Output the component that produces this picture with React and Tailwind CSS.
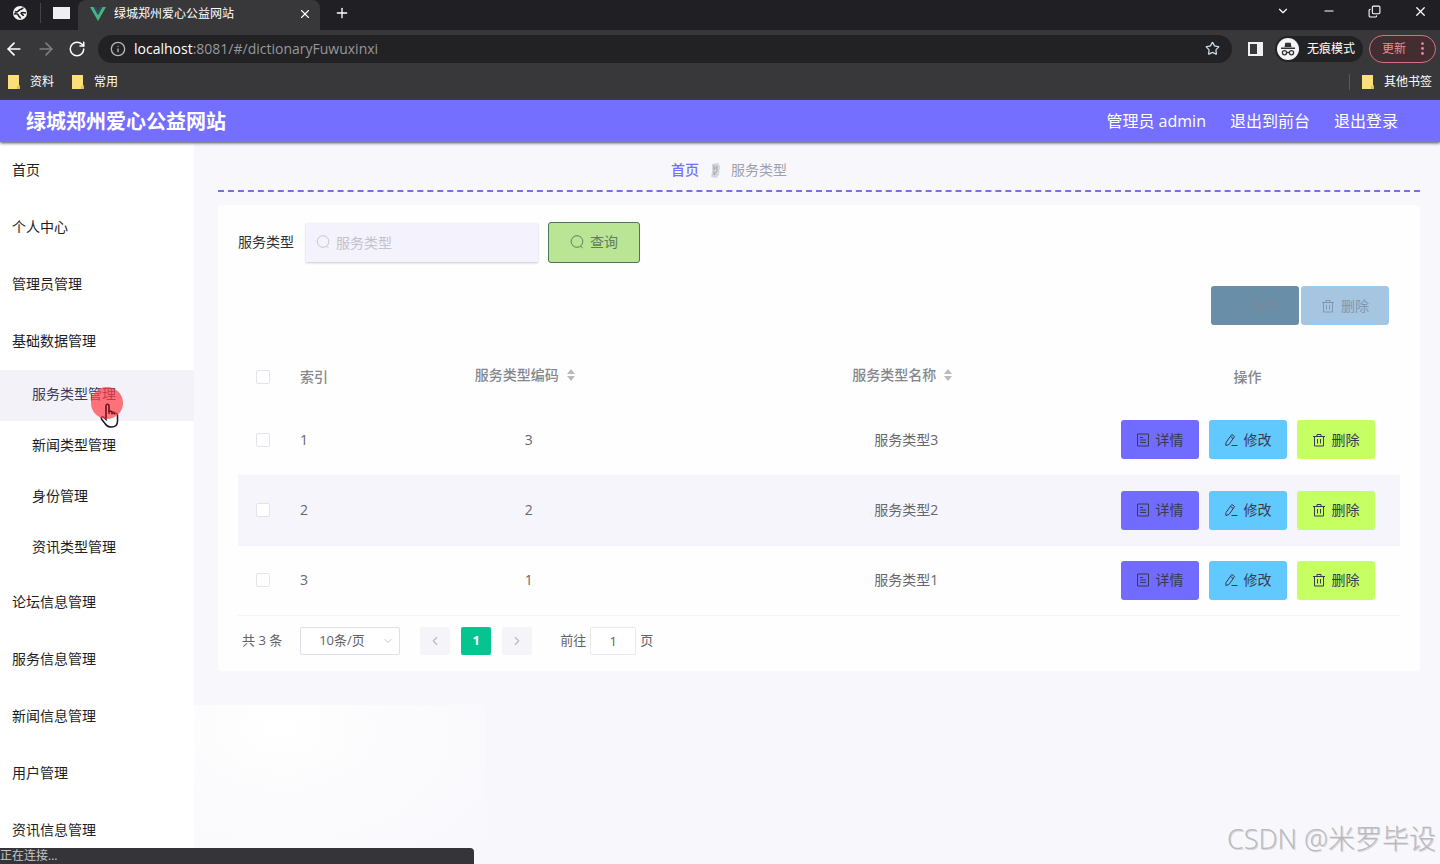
import { useState } from 'react';
import {
  ArrowLeft, ArrowRight, ChevronDown, ChevronLeft, ChevronRight, Copy, Info, Minus, MoreVertical, Plus, RotateCw, Star, X,
} from 'lucide-react';

const menus = [
  { title: '首页' },
  { title: '个人中心' },
  { title: '管理员管理' },
  { title: '基础数据管理', children: ['服务类型管理', '新闻类型管理', '身份管理', '资讯类型管理'] },
  { title: '论坛信息管理' },
  { title: '服务信息管理' },
  { title: '新闻信息管理' },
  { title: '用户管理' },
  { title: '资讯信息管理' },
];

const rows = [
  { id: 1, code: 3, name: '服务类型3' },
  { id: 2, code: 2, name: '服务类型2' },
  { id: 3, code: 1, name: '服务类型1' },
];

const checkboxClass = 'block h-[14px] w-[14px] appearance-none rounded-[2px] border border-[#e3e3ea] bg-white checked:bg-[#756fff]';

const GlobeIcon = () => (
  <svg viewBox="0 0 16 16" className="h-4 w-4" aria-hidden="true">
    <circle cx="8" cy="8" r="7" fill="#f4f4f4" />
    <path d="M3 6.500c2 1.500 3-.5 4.500-1.500S11 4.500 11 2.500M2 9c2-.5 4 0 4.500 1.500s2 1.500 2 3M9 8c1-1 3-.5 5 0M9 8c0 1.500 2 1 2.500 3" fill="none" stroke="#202024" strokeWidth="1.600" />
  </svg>
);

const VueIcon = () => (
  <svg viewBox="0 0 16 14" className="h-[14px] w-4" aria-hidden="true">
    <path d="M0 0h3.500L8 8l4.500-8H16L8 14z" fill="#41b883" />
    <path d="M3.500 0H6l2 3.500L10 0h2.500L8 8z" fill="#35495e" />
  </svg>
);

const FolderIcon = () => (
  <svg viewBox="0 0 12 15" className="h-[15px] w-3" aria-hidden="true">
    <path d="M0 1h11v10l1 1v3H0z" fill="#fbe07a" />
    <path d="M9 12h3v3H9z" fill="#e5bd4b" />
  </svg>
);

const IncognitoIcon = () => (
  <svg viewBox="0 0 22 22" className="h-[22px] w-[22px]" aria-hidden="true">
    <circle cx="11" cy="11" r="11" fill="#f5f5f7" />
    <path d="M7.500 9L8.300 4.800h5.400L14.500 9zM4 9.600h14v1.400H4z" fill="#323236" />
    <g fill="none" stroke="#323236" strokeWidth="1.300">
      <circle cx="7.500" cy="14.800" r="2.100" />
      <circle cx="14.500" cy="14.800" r="2.100" />
      <path d="M9.600 14.500h2.800" />
    </g>
  </svg>
);

const SearchIcon = () => (
  <svg viewBox="0 0 14 14" className="h-[14px] w-[14px]" fill="none" stroke="currentColor" aria-hidden="true">
    <circle cx="7" cy="6.500" r="5.800" />
    <path d="M10.500 11l2.200 2.200" />
  </svg>
);

const DocumentIcon = () => (
  <svg viewBox="0 0 14 14" className="h-[14px] w-[14px]" fill="none" stroke="currentColor" aria-hidden="true">
    <path d="M1.500 1h11v12h-11zM4 4.500h3M4 7h6M4 9.500h6" />
  </svg>
);

const EditIcon = () => (
  <svg viewBox="0 0 14 14" className="h-[14px] w-[14px]" fill="none" stroke="currentColor" aria-hidden="true">
    <path d="M2 9.500L7.800 1.500l2.800 2L5 11.500l-3.200 1zM6.500 3.500l2.800 2M7.500 12.500h6" />
  </svg>
);

const DeleteIcon = () => (
  <svg viewBox="0 0 14 14" className="h-[14px] w-[14px]" fill="none" stroke="currentColor" aria-hidden="true">
    <path d="M1 3.500h12M2.500 3.500v9.500h9V3.500M5 3.500v-2h4v2M5.500 6v4.500M8.500 6v4.500" />
  </svg>
);

const SortIcon = () => (
  <svg viewBox="0 0 8 12" className="h-3 w-2" fill="#b9bac0" aria-hidden="true">
    <path d="M4 0l4 5H0zM4 12L0 7h8z" />
  </svg>
);

const Pointer = () => (
  <svg viewBox="0 0 34 42" className="pointer-events-none absolute left-[90px] top-4 h-[42px] w-[34px]" aria-hidden="true">
    <path
      d="M16 20c0-2.500 3-2.500 3 0v6c.5-1.200 2.800-1 3 .5.800-1 2.700-.5 2.800 1 1-.7 2.700 0 2.700 1.500v6c0 4-2 6-6 6-3.500 0-5-1-6.500-3.500L11.500 33c-1-2 1-3 2.500-1.500l2 2z"
      fill="#fff" stroke="#1c1c28" strokeWidth="1.500"
    />
    <circle cx="17" cy="17" r="16" fill="#ff3c46" fillOpacity="0.700" />
    <path d="M16 32V20c0-2.500 3-2.500 3 0v8m0-2c.5-1.200 3-1 3 .500v2m0-1c.8-1 2.800-.500 2.800 1" fill="none" stroke="#6b1420" strokeWidth="1.300" />
  </svg>
);

const Browser = () => (
  <div className="shrink-0 bg-[#38383b] text-xs text-white">
    <div className="flex h-[30px] bg-[#202024]">
      <div className="flex w-[78px] items-center gap-3 pb-1 pl-3">
        <GlobeIcon />
        <span className="h-5 w-px bg-[#454549]" />
        <span className="h-3 w-[17px] bg-[#efefef]" />
      </div>
      <div className="flex w-[242px] items-center rounded-t-lg bg-[#38383b] pl-3 pr-2 pb-[2px]">
        <VueIcon />
        <span className="ml-2 flex-1">绿城郑州爱心公益网站</span>
        <button aria-label="关闭标签页"><X size={14} /></button>
      </div>
      <button className="ml-[14px] pb-1" aria-label="新标签页"><Plus size={16} /></button>
      <div className="ml-auto flex items-center gap-8 pb-2 pr-3">
        <button aria-label="搜索标签页"><ChevronDown size={14} /></button>
        <button aria-label="最小化"><Minus size={14} /></button>
        <button aria-label="还原"><Copy size={13} className="-scale-x-100 rotate-180" /></button>
        <button aria-label="关闭"><X size={15} /></button>
      </div>
    </div>
    <div className="flex h-[37px] items-center pl-1 pr-1">
      <button aria-label="后退"><ArrowLeft size={20} /></button>
      <button aria-label="前进" className="ml-3 text-[#7e7e82]"><ArrowRight size={20} /></button>
      <button aria-label="刷新" className="ml-3"><RotateCw size={18} /></button>
      <div className="ml-3 flex h-7 flex-1 items-center rounded-full bg-[#222225] pl-3 pr-3">
        <Info size={16} className="text-[#b5b5b8]" />
        <span className="ml-2 text-sm text-[#97979b]"><span className="text-white">localhost</span>:8081/#/dictionaryFuwuxinxi</span>
        <button aria-label="收藏" className="ml-auto text-[#c9dcec]"><Star size={15} /></button>
      </div>
      <button aria-label="侧边栏" className="ml-4 h-[14px] w-[15px] border-2 border-r-[6px] border-[#f0f0f0]" />
      <div className="ml-3 flex h-[26px] items-center gap-2 rounded-full bg-[#222225] px-[2px] pr-2">
        <IncognitoIcon />
        <span>无痕模式</span>
      </div>
      <button className="ml-[6px] flex h-7 items-center gap-2 rounded-full border border-[#d8707a] bg-[#422e32] pl-3 pr-1 text-[#f08b90]">
        更新
        <MoreVertical size={17} />
      </button>
    </div>
    <div className="flex h-[33px] items-center px-2 pb-1">
      <a href="#ziliao" className="flex items-center gap-[10px]"><FolderIcon />资料</a>
      <a href="#changyong" className="ml-[18px] flex items-center gap-[10px]"><FolderIcon />常用</a>
      <span className="ml-auto h-4 w-px bg-[#5a5a5e]" />
      <a href="#qita" className="ml-3 flex items-center gap-[10px]"><FolderIcon />其他书签</a>
    </div>
  </div>
);

const Sidebar = () => (
  <nav className="w-[194px] shrink-0 bg-white text-sm text-[#1d1d24]">
    {menus.map((menu) => (
      <div key={menu.title}>
        <a href="#menu" className="flex h-[57px] items-center px-3 pb-[2px]">{menu.title}</a>
        {menu.children && menu.children.map((child, index) => (
          <a
            key={child}
            href="#submenu"
            className={index === 0 ? 'relative flex h-[51px] items-center bg-[#f3f2f8] px-8 pb-[3px] text-[#3d3960]' : 'flex h-[51px] items-center px-8 pb-[3px]'}
          >
            {child}
            {index === 0 && <Pointer />}
          </a>
        ))}
      </div>
    ))}
  </nav>
);

const DataTable = () => (
  <table className="mt-6 w-full table-fixed text-sm text-[#66676d]">
    <colgroup>
      <col className="w-[50px]" />
      <col className="w-[52px]" />
      <col />
      <col />
      <col className="w-[305px]" />
    </colgroup>
    <thead className="text-[#85868c]">
      <tr className="h-14">
        <th className="pl-[18px]"><input type="checkbox" aria-label="全选" className={checkboxClass} /></th>
        <th className="pl-3 text-left font-medium">索引</th>
        <th className="pr-2 font-medium"><span className="flex items-center justify-center gap-2 pb-1">服务类型编码<SortIcon /></span></th>
        <th className="pr-2 font-medium"><span className="flex items-center justify-center gap-2 pb-1">服务类型名称<SortIcon /></span></th>
        <th className="font-medium">操作</th>
      </tr>
    </thead>
    <tbody>
      {rows.map((row) => (
        <tr key={row.id} className="h-[70px] border-b border-[#f4f3f9] even:bg-[#f6f5fb]">
          <td className="pl-[18px]"><input type="checkbox" aria-label={`选择第${row.id}行`} className={checkboxClass} /></td>
          <td className="pl-3">{row.id}</td>
          <td className="text-center">{row.code}</td>
          <td className="text-center">{row.name}</td>
          <td>
            <div className="flex justify-center gap-[10px] text-[#383a50]">
              <button className="flex h-[39px] w-[78px] items-center justify-center gap-[6px] rounded-[3px] bg-[#716bff]"><DocumentIcon />详情</button>
              <button className="flex h-[39px] w-[78px] items-center justify-center gap-[6px] rounded-[3px] bg-[#62c9ff]"><EditIcon />修改</button>
              <button className="flex h-[39px] w-[78px] items-center justify-center gap-[6px] rounded-[3px] bg-[#c5ff62]"><DeleteIcon />删除</button>
            </div>
          </td>
        </tr>
      ))}
    </tbody>
  </table>
);

const Pagination = () => (
  <div className="mt-[10px] flex h-[30px] items-center pl-1 text-[13px] text-[#606266]">
    <span>共 3 条</span>
    <div className="relative ml-[18px]">
      <select aria-label="每页条数" className="h-7 w-[100px] appearance-none rounded-[2px] border border-[#e0dfe8] bg-white pl-[18px]">
        <option>10条/页</option>
        <option>20条/页</option>
      </select>
      <ChevronDown size={12} className="pointer-events-none absolute right-[6px] top-2 text-[#c0c4cc]" />
    </div>
    <button aria-label="上一页" className="ml-5 flex h-7 w-[30px] items-center justify-center rounded-[2px] bg-[#f5f4f8] text-[#b8bac2]"><ChevronLeft size={14} /></button>
    <button className="ml-[11px] h-7 w-[30px] rounded-[2px] bg-[#04c48f] font-bold text-white">1</button>
    <button aria-label="下一页" className="ml-[11px] flex h-7 w-[30px] items-center justify-center rounded-[2px] bg-[#f5f4f8] text-[#b8bac2]"><ChevronRight size={14} /></button>
    <label className="ml-7 flex items-center gap-1">
      前往
      <input defaultValue="1" className="h-7 w-[46px] rounded-[2px] border border-[#e9e8f0] bg-white text-center" />
      页
    </label>
  </div>
);

const App = () => {
  const [keyword, setKeyword] = useState('');

  return (
    <div className="relative flex min-h-screen flex-col overflow-hidden bg-[#f8f7fc] font-['Open_Sans','Noto_Sans_CJK_SC',sans-serif]">
      <Browser />

      <header className="relative flex h-[42px] shrink-0 items-center justify-between bg-[#756fff] pl-[26px] pr-[42px] text-white shadow-[0_1px_3px_#44445a]">
        <h1 className="pt-[2px] text-xl font-bold">绿城郑州爱心公益网站</h1>
        <div className="flex gap-6 text-base">
          <span>管理员 admin</span>
          <a href="#front">退出到前台</a>
          <a href="#logout">退出登录</a>
        </div>
      </header>

      <div className="flex flex-1">
        <Sidebar />

        <main className="relative min-w-0 flex-1 pl-6 pr-5">
          <div className="absolute left-0 top-[563px] h-[159px] w-[292px] bg-radial-[at_30%_15%] from-white via-[#fbfbfd] via-40% to-[#f8f7fc]" aria-hidden="true" />
          <div className="flex h-[50px] items-center justify-center gap-[10px] border-b-2 border-dashed border-[#756fe8] pr-[180px] pt-2 text-sm">
            <a href="#home" className="font-medium text-[#756fff]">首页</a>
            <svg viewBox="0 0 12 16" className="h-4 w-3" aria-hidden="true">
              <path d="M3 2l6-1 2 3-1 9-3 3-5-1 1-5z" fill="#d5d6dc" />
              <path d="M5 3v5l3-4v5l-3 4V9" fill="none" stroke="#a2a5ad" />
            </svg>
            <span className="text-[#9ea1ab]">服务类型</span>
          </div>

          <section className="relative mt-[13px] rounded bg-[#fefefe] px-5 pb-[15px] pt-[17px]">
            <form className="flex h-10 items-center text-sm" onSubmit={(e) => e.preventDefault()}>
              <label htmlFor="keyword" className="text-[#303138]">服务类型</label>
              <div className="relative ml-3 text-[#c6c5d2]">
                <span className="absolute left-[10px] top-3"><SearchIcon /></span>
                <input
                  id="keyword"
                  value={keyword}
                  onChange={(e) => setKeyword(e.target.value)}
                  placeholder="服务类型"
                  className="h-[39px] w-[232px] bg-[#f4f2fc] pl-[30px] text-[#606266] shadow-[0_1px_2px_#c9c8d2] placeholder:text-[#c2c1ce]"
                />
              </div>
              <button className="ml-[10px] flex h-[41px] w-[92px] items-center justify-center gap-[6px] rounded-[3px] border border-[#4f7558] bg-[#b9e595] text-[#607c5e]">
                <SearchIcon />查询
              </button>
            </form>

            <div className="mt-6 flex justify-end gap-[2px] pr-[11px] text-sm">
              <button className="flex h-[39px] w-[88px] items-center justify-center gap-[6px] rounded-[3px] bg-[#698fa8] text-[#778a9c]"><Plus size={14} strokeWidth={1} />新增</button>
              <button className="flex h-[39px] w-[88px] items-center justify-center gap-[6px] rounded-[3px] border border-[#9ac9ef] bg-[#a5c5e0] text-[#8197ad]"><DeleteIcon />删除</button>
            </div>

            <DataTable />
            <Pagination />
          </section>
        </main>
      </div>

      <div className="absolute bottom-0 left-0 w-[474px] rounded-tr bg-[#353539] text-xs leading-4 text-[#c6c6ca]">正在连接...</div>
      <div className="absolute bottom-1 right-1 text-[27px] font-light leading-[42px] text-[#b9b9be] [text-shadow:1px_1px_0_#d6d6da]">CSDN @米罗毕设</div>
    </div>
  );
};

export default App;
